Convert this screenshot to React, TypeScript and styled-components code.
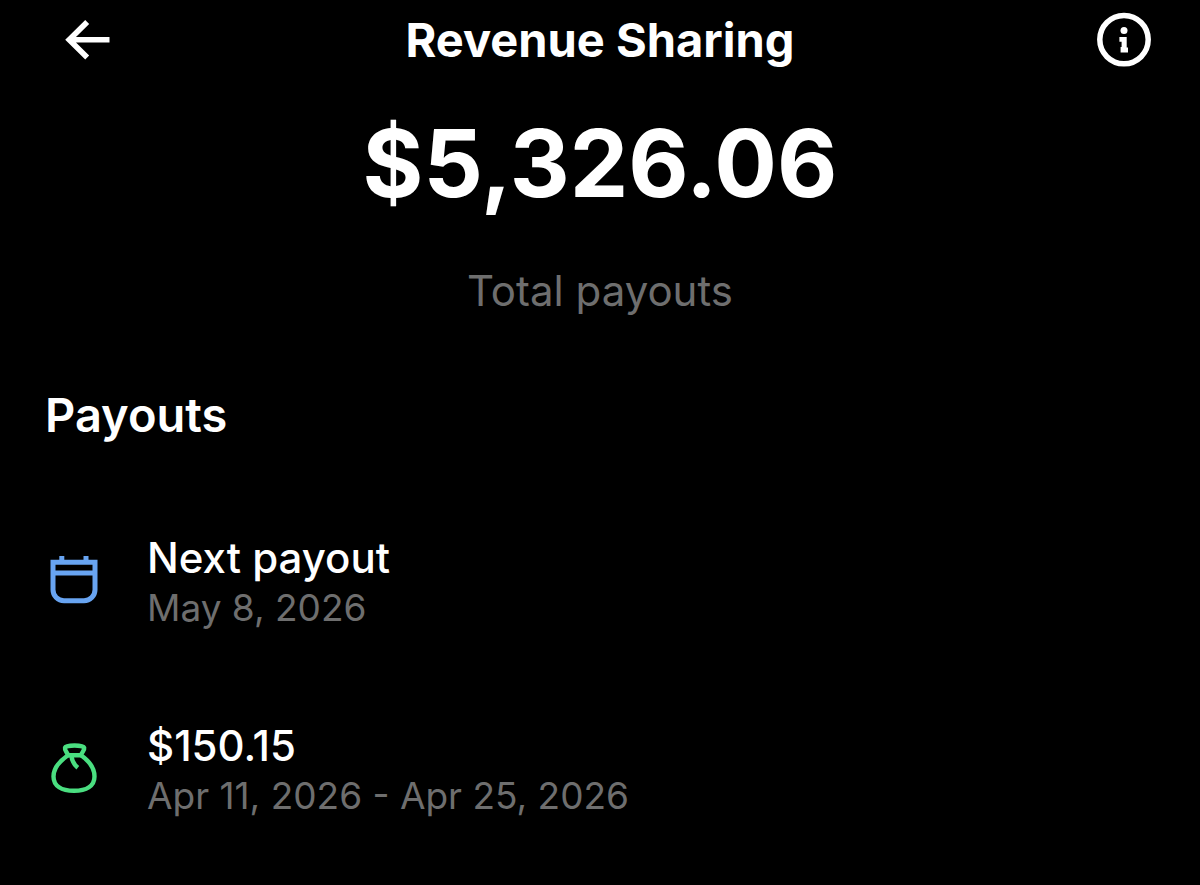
import React from "react";
import styled, { createGlobalStyle } from "styled-components";

const GlobalStyle = createGlobalStyle`
  * { box-sizing: border-box; }
  body {
    margin: 0;
    background: #000;
    color: #fff;
    font-family: Inter, "Liberation Sans", sans-serif;
  }
`;

const Page = styled.div`
  min-height: 100vh;
  padding-bottom: 48px;
`;

const Header = styled.header`
  display: grid;
  grid-template-columns: 1fr auto 1fr;
  align-items: center;
  height: 80px;
  padding: 0 48px;
`;

const Title = styled.h1`
  margin: 0;
  font-size: 47px;
  line-height: 60px;
  font-weight: 700;
`;

const IconButton = styled.button<{ $side: "start" | "end" }>`
  justify-self: ${(p) => p.$side};
  width: 56px;
  height: 56px;
  margin-left: ${(p) => (p.$side === "start" ? "12px" : "0")};
  padding: 0;
  border: 0;
  background: none;
  color: inherit;
  cursor: pointer;
`;

const Icon = styled.svg`
  display: block;
  flex: none;
  width: 56px;
  height: 56px;
  fill: none;
  stroke: currentColor;
`;

const Summary = styled.section`
  display: flex;
  flex-direction: column;
  align-items: center;
  gap: 44px;
  padding-top: 27px;
`;

const Amount = styled.p`
  margin: 0;
  font-size: 93px;
  line-height: 112px;
  font-weight: 700;
`;

const Caption = styled.p`
  margin: 0;
  color: #6e6e6e;
  font-size: 42px;
  line-height: 56px;
`;

const Payouts = styled.section`
  padding: 66px 45px 0;
`;

const SectionTitle = styled.h2`
  margin: 0;
  font-size: 47px;
  line-height: 60px;
  font-weight: 600;
`;

const List = styled.ul`
  display: flex;
  flex-direction: column;
  gap: 88px;
  margin: 87px 0 0;
  padding: 0;
  list-style: none;
`;

const Item = styled.li<{ $tint: string }>`
  display: flex;
  align-items: center;
  gap: 46px;

  > svg {
    color: ${(p) => p.$tint};
  }
`;

const ItemTitle = styled.div`
  font-size: 42px;
  line-height: 52px;
  font-weight: 500;
`;

const ItemDate = styled.div`
  color: #6e6e6e;
  font-size: 37px;
  line-height: 48px;
`;

const BackIcon = () => (
  <Icon viewBox="0 0 56 56" strokeWidth="5.6" aria-hidden="true">
    <path d="M49.5 27.8H9M27.2 10 9.2 27.8l18 17.8" />
  </Icon>
);

const InfoIcon = () => (
  <Icon viewBox="0 0 56 56" aria-hidden="true">
    <circle cx="28" cy="27.6" r="24.2" strokeWidth="5.5" />
    <circle cx="28" cy="18.6" r="3.5" fill="currentColor" stroke="none" />
    <path d="M23.4 25h7.300v10.600h1.300v4.800h-7.400v-5.400h1v-5.200h-2.200z" fill="currentColor" stroke="none" />
  </Icon>
);

const CalendarIcon = () => (
  <Icon viewBox="0 0 56 56" strokeWidth="5" aria-hidden="true">
    <path d="M8 8.300h42v27.400a11 11 0 0 1-11 11H19a11 11 0 0 1-11-11zM8 19h42M16.800 2v5M41 2v5" />
  </Icon>
);

const MoneyBagIcon = () => (
  <Icon viewBox="0 0 56 56" strokeWidth="4.4" strokeLinejoin="round" aria-hidden="true">
    <path d="M23 13.200C22 10.200 19.400 8 20 5.700 21 2.700 38 2.700 39.200 5.700 39.800 8 37 10.200 36 13.200z" />
    <path d="M23 13.200C14 19.500 8.500 26 8.500 34.500 8.500 44 16.500 48.800 29 48.800S49.500 44 49.500 34.500C49.500 26 45 19.500 36 13.200" />
    <path d="M26.300 13.500c.6 5.200 2.800 9.300 6.500 12.300" />
  </Icon>
);

const payouts = [
  { title: "Next payout", date: "May 8, 2026", tint: "#68a4f1", Glyph: CalendarIcon },
  { title: "$150.15", date: "Apr 11, 2026 - Apr 25, 2026", tint: "#4ade80", Glyph: MoneyBagIcon },
];

export default function App() {
  return (
    <Page>
      <GlobalStyle />
      <Header>
        <IconButton type="button" $side="start" aria-label="Back">
          <BackIcon />
        </IconButton>
        <Title>Revenue Sharing</Title>
        <IconButton type="button" $side="end" aria-label="About revenue sharing">
          <InfoIcon />
        </IconButton>
      </Header>
      <main>
        <Summary>
          <Amount>$5,326.06</Amount>
          <Caption>Total payouts</Caption>
        </Summary>
        <Payouts>
          <SectionTitle>Payouts</SectionTitle>
          <List>
            {payouts.map(({ title, date, tint, Glyph }) => (
              <Item key={title} $tint={tint}>
                <Glyph />
                <div>
                  <ItemTitle>{title}</ItemTitle>
                  <ItemDate>{date}</ItemDate>
                </div>
              </Item>
            ))}
          </List>
        </Payouts>
      </main>
    </Page>
  );
}
